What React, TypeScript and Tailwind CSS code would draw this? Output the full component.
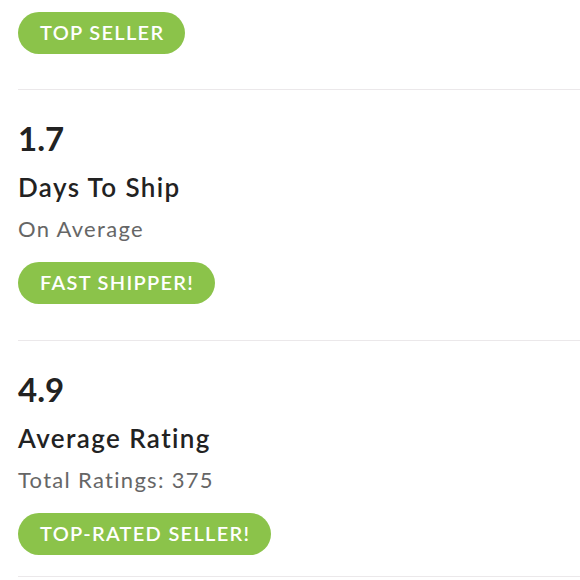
import React from 'react';

const font = { fontFamily: 'Lato, "Liberation Sans", sans-serif' };

function Badge({ label }: { label: string }) {
  return (
    <span className="inline-flex h-[42px] items-center rounded-full bg-[#8bc34a] pb-[3px] pl-[22px] pr-[21px] text-[20px] font-semibold leading-[24px] tracking-[1.3px] text-white">
      {label}
    </span>
  );
}

function Stat({ value, title, sub, badge, last }: { value: string; title: string; sub: string; badge: string; last?: boolean }) {
  return (
    <div className={`border-b border-[#ebe8ea] pt-[28px] ${last ? 'pb-[21px]' : 'pb-[36px]'}`}>
      <div className="text-[33px] font-bold leading-[40px] text-[#222]">{value}</div>
      <div className="mt-[13px] text-[26px] font-semibold leading-[32px] tracking-[1.4px] text-[#222]">{title}</div>
      <div className="mt-[12px] text-[22px] leading-[28px] tracking-[1.3px] text-[#666]">{sub}</div>
      <div className="mt-[19px]">
        <Badge label={badge} />
      </div>
    </div>
  );
}

export default function App() {
  return (
    <div className="h-[580px] w-[580px] overflow-hidden bg-white" style={font}>
      <div className="ml-[18px]">
        <div className="border-b border-[#ebe8ea] pt-[12px] pb-[35px]">
          <Badge label="TOP SELLER" />
        </div>
        <Stat value="1.7" title="Days To Ship" sub="On Average" badge="FAST SHIPPER!" />
        <Stat value="4.9" title="Average Rating" sub="Total Ratings: 375" badge="TOP-RATED SELLER!" last />
      </div>
    </div>
  );
}
